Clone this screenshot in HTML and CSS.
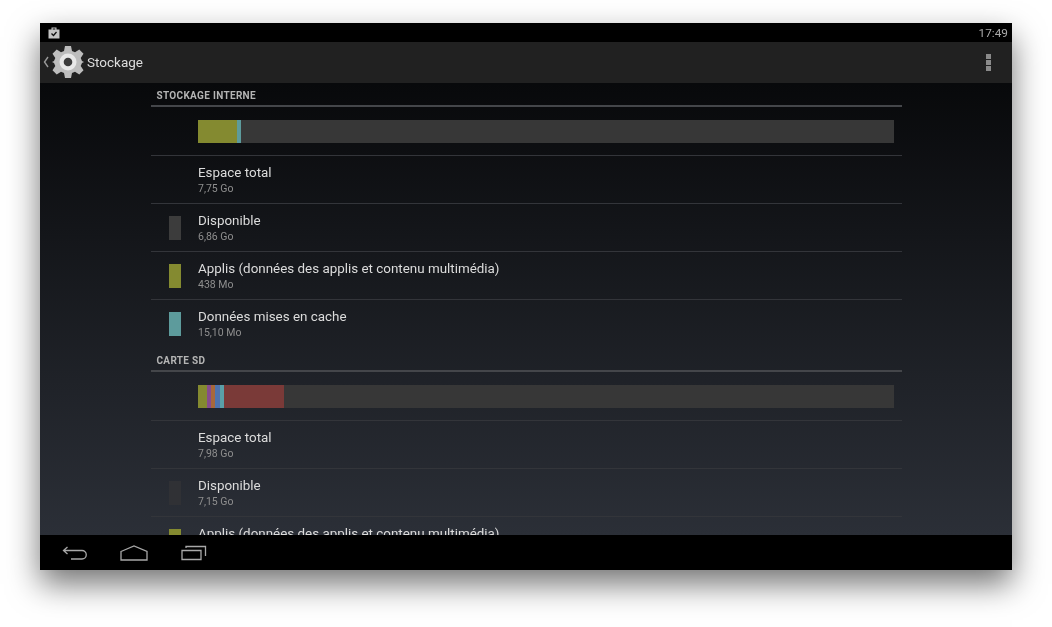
FILE: index.html
```
<!DOCTYPE html>
<html lang="fr">
<head>
<meta charset="utf-8">
<title>Stockage</title>
<link rel="stylesheet" href="styles.css">
</head>
<body>
<div class="device">
  <div class="status">
    <svg class="status-icon" width="12" height="12" viewBox="0 0 12 12"><path d="M3.500 2.500V.500h5v2H11.500v9H.500v-9zM4.700 2.500h2.600V1.600H4.700z" fill="#c4c4c4" fill-rule="evenodd"/><path d="M3.500 6.500l2 2 3-3.500" fill="none" stroke="#111" stroke-width="1.300"/></svg>
    <span class="clock">17:49</span>
  </div>
  <div class="actionbar">
    <svg class="chevron" width="6" height="12" viewBox="0 0 6 12"><path d="M5 1L1.500 6 5 11" fill="none" stroke="#9a9a9a" stroke-width="1.400"/></svg>
    <svg class="gear" width="32" height="32" viewBox="0 0 32 32"><path fill="#bdbdbd" d="M13 0h6l1 5 3 1.300 4.300-2.800 4.200 4.200L28.700 12l1.300 3 2 1-2 1-1.300 3 2.800 4.300-4.200 4.200L23 25.700 20 27l-1 5h-6l-1-5-3-1.300-4.300 2.800-4.200-4.200L3.300 20 2 17l-2-1 2-1 1.300-3L.500 7.700l4.200-4.200L9 6.300 12 5z"/><circle cx="16" cy="16" r="8.500" fill="#e8e8e8"/><circle cx="16" cy="16" r="4.300" fill="#3c3c3c"/></svg>
    <span class="title">Stockage</span>
    <span class="menu"><i></i><i></i><i></i></span>
  </div>
  <div class="content">
    <div class="column">
      <div class="section-head">STOCKAGE INTERNE</div>
      <div class="bar-row">
        <div class="bar">
          <span class="seg olive w-a"></span><span class="seg teal w-b"></span>
        </div>
      </div>
      <div class="row"><span class="swatch"></span><div><div class="name">Espace total</div><div class="sub">7,75 Go</div></div></div>
      <div class="row"><span class="swatch grey"></span><div><div class="name">Disponible</div><div class="sub">6,86 Go</div></div></div>
      <div class="row"><span class="swatch olive"></span><div><div class="name">Applis (données des applis et contenu multimédia)</div><div class="sub">438 Mo</div></div></div>
      <div class="row last"><span class="swatch teal"></span><div><div class="name">Données mises en cache</div><div class="sub">15,10 Mo</div></div></div>
      <div class="section-head">CARTE SD</div>
      <div class="bar-row">
        <div class="bar">
          <span class="seg olive w-c"></span><span class="seg purple w-d"></span><span class="seg orange w-e"></span><span class="seg blue w-f"></span><span class="seg cyan w-g"></span><span class="seg red w-h"></span>
        </div>
      </div>
      <div class="row"><span class="swatch"></span><div><div class="name">Espace total</div><div class="sub">7,98 Go</div></div></div>
      <div class="row"><span class="swatch dim"></span><div><div class="name">Disponible</div><div class="sub">7,15 Go</div></div></div>
      <div class="row"><span class="swatch olive"></span><div><div class="name">Applis (données des applis et contenu multimédia)</div></div></div>
    </div>
  </div>
  <div class="navbar">
    <svg width="26" height="16" viewBox="0 0 26 16"><path d="M5.500 2L1.500 5.500 5.500 9M1.500 5.500H20a4 4 0 0 1 0 8.500H9" fill="none" stroke="#a8a8a8" stroke-width="1.300"/></svg>
    <svg width="28" height="16" viewBox="0 0 28 16"><path d="M1 6.500L14 1l13 5.500V15H1z" fill="none" stroke="#a8a8a8" stroke-width="1.300"/></svg>
    <svg width="27" height="16" viewBox="0 0 27 16"><path d="M2 5.500h19V14.500H2zM6 3V1.500H25.500V11" fill="none" stroke="#a8a8a8" stroke-width="1.300"/></svg>
  </div>
</div>
</body>
</html>
```
FILE: styles.css
```
* { box-sizing: border-box; }
html, body { margin: 0; height: 100%; background: #fff; overflow: hidden; }
body { padding: 23px 40px 57px; font-family: Roboto, "Liberation Sans", sans-serif; }
.device {
  height: 547px;
  display: flex;
  flex-direction: column;
  overflow: hidden;
  background: #000;
  box-shadow: 0 14px 30px rgba(0, 0, 0, .55);
  filter: blur(.4px);
}
.status {
  height: 19px;
  flex: none;
  display: flex;
  align-items: center;
  justify-content: space-between;
  padding: 0 4px 0 8px;
  background: #000;
}
.clock { font-size: 11.800px; color: #a9a9a9; }
.actionbar {
  height: 41px;
  flex: none;
  display: flex;
  align-items: center;
  padding: 0 21px 2px 3px;
  background: #212121;
}
.chevron { margin-right: 3px; }
.gear { margin-right: 3px; }
.title { font-size: 13.500px; color: #dcdcdc; flex: 1; }
.menu { display: flex; flex-direction: column; gap: 1px; margin-top: 2px; }
.menu i { display: block; width: 5px; height: 5px; background: #8a8a8a; }
.content {
  height: 452px;
  flex: none;
  overflow: hidden;
  padding-left: 111px;
  background: linear-gradient(#08090b, #2b2f37);
}
.column { width: 751px; }
.section-head {
  height: 24px;
  padding: 6.500px 0 0 5.500px;
  border-bottom: 2px solid #44464a;
  font-size: 10px;
  font-weight: 700;
  line-height: 12px;
  letter-spacing: .32px;
  color: #b4b4b4;
}
.bar-row {
  height: 49px;
  padding: 13px 8px 0 47px;
  border-bottom: 1px solid #33353a;
}
.bar { display: flex; height: 23px; background: #373737; }
.seg { display: block; height: 100%; }
.row {
  height: 48px;
  display: flex;
  border-bottom: 1px solid #33353a;
  padding-top: 8px;
}
.row.last { border-bottom: 0; }
.swatch { width: 12px; height: 24px; margin: 4px 17.500px 0 17.500px; flex: none; }
.name { font-size: 13.400px; line-height: 18px; color: #dcdcdc; }
.sub { font-size: 10.500px; line-height: 15px; margin-top: -1px; color: #8f8f8f; }
.grey { background: #3c3c3c; }
.dim { background: #303135; }
.olive { background: #848a30; }
.teal { background: #5d9b9c; }
.purple { background: #864d8c; }
.orange { background: #a8683a; }
.blue { background: #4e73ad; }
.cyan { background: #5aa0a8; }
.red { background: #7a3a38; }
.w-a { width: 39px; }
.w-b { width: 4px; }
.w-c { width: 9px; }
.w-d { width: 4px; }
.w-e { width: 4px; }
.w-f { width: 5px; }
.w-g { width: 4px; }
.w-h { width: 60px; }
.navbar {
  height: 35px;
  flex: none;
  display: flex;
  align-items: center;
  gap: 32px;
  padding: 0 0 0 22px;
  background: #000;
}
```
